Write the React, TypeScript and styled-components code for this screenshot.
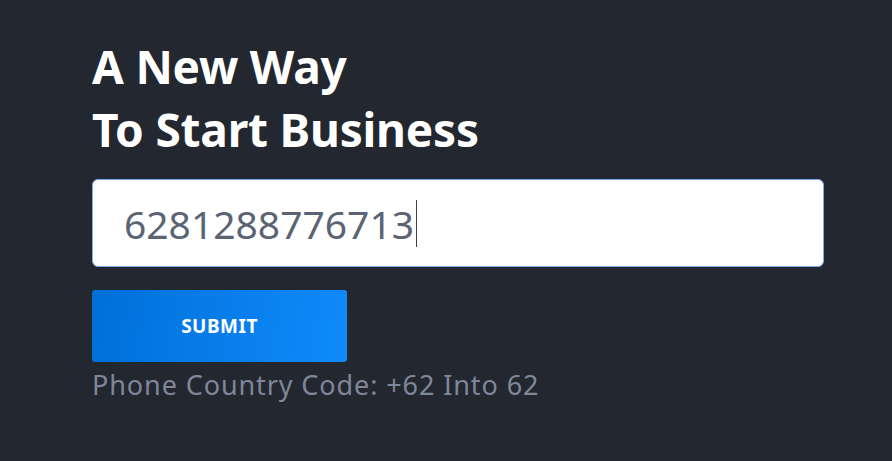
import React from "react";
import styled, { createGlobalStyle } from "styled-components";

const Global = createGlobalStyle`
  html, body { margin: 0; padding: 0; background: #23272f; }
  body { font-family: "Noto Sans", "Open Sans", sans-serif; }
`;

const Page = styled.main`
  min-height: 461px;
  padding: 35px 68px 0 92px;
  box-sizing: border-box;
  display: flex;
  flex-direction: column;
  align-items: flex-start;
`;

const Title = styled.h1`
  margin: 0;
  font-family: "Noto Sans", sans-serif;
  font-weight: 700;
  font-size: 46px;
  line-height: 63px;
  color: #ffffff;
  letter-spacing: -0.2px;
`;

const Field = styled.div`
  margin-top: 18px;
  width: 732px;
  height: 88px;
  box-sizing: border-box;
  background: #ffffff;
  border: 1px solid #7fa8e6;
  border-radius: 6px;
  display: flex;
  align-items: center;
  padding-left: 31px;
`;

const Value = styled.span`
  font-family: "Noto Sans", sans-serif;
  font-size: 39px;
  color: #5b6475;
  display: flex;
  align-items: center;
`;

const Caret = styled.span`
  display: inline-block;
  width: 1px;
  height: 47px;
  background: #3b4150;
  margin-left: 2px;
`;

const Submit = styled.button`
  margin-top: 23px;
  width: 255px;
  height: 72px;
  border: none;
  border-radius: 3px;
  background: linear-gradient(100deg, #006fd8 0%, #0f8bfc 100%);
  color: #ffffff;
  font-family: "Noto Sans", sans-serif;
  font-weight: 700;
  font-size: 19px;
  letter-spacing: 0.5px;
  cursor: pointer;
`;

const Hint = styled.p`
  margin: 5px 0 0;
  font-family: "Noto Sans", sans-serif;
  font-size: 27px;
  line-height: 36px;
  letter-spacing: 0.9px;
  color: #7e8799;
`;

export default function App() {
  return (
    <>
      <Global />
      <Page>
        <Title>
          A New Way
          <br />
          To Start Business
        </Title>
        <Field>
          <Value>
            6281288776713
            <Caret />
          </Value>
        </Field>
        <Submit type="button">SUBMIT</Submit>
        <Hint>Phone Country Code: +62 Into 62</Hint>
      </Page>
    </>
  );
}
